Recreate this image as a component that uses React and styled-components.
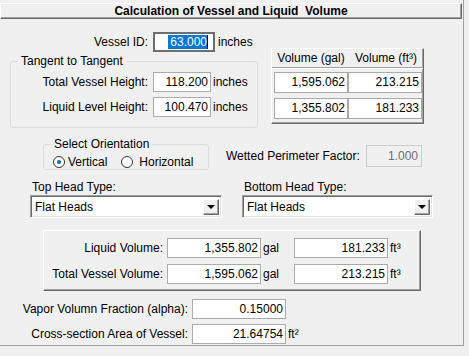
import React from 'react'
import styled, { createGlobalStyle } from 'styled-components'

const GlobalStyle = createGlobalStyle`
  html, body { margin: 0; padding: 0; background: #f0f0f0; }
  body {
    font-family: "Liberation Sans", Arial, sans-serif;
    font-size: 12px;
    color: #000;
  }
  * { box-sizing: border-box; }
`

const Panel = styled.div`
  width: 464px;
  height: 346px;
  padding-top: 3px;
  border-right: 1px solid #a0a0a0;
  border-bottom: 1px solid #a0a0a0;
`

const TitleBar = styled.div`
  width: 462px;
  height: 16px;
  border-top: 1px solid #fff;
  border-left: 1px solid #fff;
  border-right: 1px solid #696969;
  border-bottom: 1px solid #696969;
  box-shadow: inset -1px -1px 0 #a0a0a0;
  font-weight: bold;
  text-align: center;
  line-height: 14px;
  white-space: pre;
`

const TopSection = styled.div`
  display: flex;
  align-items: flex-start;
`

const LeftCol = styled.div`
  width: 258px;
  padding-top: 13px;
`

const Row = styled.div`
  display: flex;
  align-items: center;
  height: ${(p) => p.$h || 20}px;
  margin-top: ${(p) => p.$mt || 0}px;
  margin-left: ${(p) => p.$ml || 0}px;
`

const Label = styled.span`
  flex: none;
  width: ${(p) => p.$w}px;
  margin-right: ${(p) => p.$gap ?? 4}px;
  text-align: ${(p) => p.$align || 'right'};
  white-space: nowrap;
`

const Field = styled.div`
  flex: none;
  width: ${(p) => p.$w}px;
  height: ${(p) => p.$h || 20}px;
  display: flex;
  align-items: center;
  justify-content: flex-end;
  padding: 0 ${(p) => p.$pr ?? 2}px 0 2px;
  background: ${(p) => (p.$disabled ? '#f0f0f0' : '#fff')};
  color: ${(p) => (p.$disabled ? '#6d6d6d' : '#000')};
  border: ${(p) => (p.$focused ? '2px solid #6e6e6e' : p.$disabled ? '1px solid #cccccc' : '1px solid #ababab')};
  white-space: nowrap;
`

const Selected = styled.span`
  background: #0078d7;
  color: #fff;
  line-height: 14px;
  padding-left: 2px;
`

const Caret = styled.span`
  width: 1px;
  height: 14px;
  background: #000;
`

const Unit = styled.span`
  flex: none;
  width: ${(p) => (p.$w ? `${p.$w}px` : 'auto')};
  margin-left: ${(p) => p.$ml ?? 2}px;
  white-space: nowrap;
`

const Group = styled.div`
  margin: ${(p) => p.$mt || 0}px 0 0 ${(p) => p.$ml || 0}px;
  width: ${(p) => p.$w}px;
  padding-bottom: ${(p) => p.$pb || 0}px;
  border: 1px solid #dcdcdc;
  border-radius: 3px;
`

const Legend = styled.div`
  display: table;
  margin: -8px 0 0 7px;
  padding: 0 3px;
  line-height: 14px;
  background: #f0f0f0;
`

const VolTable = styled.div`
  margin: 29px 0 0 13px;
  width: 153px;
  height: 76px;
  border-top: 1px solid #fff;
  border-left: 1px solid #fff;
  border-right: 1px solid #696969;
  border-bottom: 1px solid #696969;
  box-shadow: inset -1px -1px 0 #a0a0a0;
`

const TableHead = styled.div`
  display: grid;
  grid-template-columns: 74px 74px;
  column-gap: 1px;
  padding: 0 2px;
  height: 19px;
  line-height: 18px;
  border-bottom: 1px solid #a0a0a0;
  box-shadow: 0 1px 0 #fff;
  text-align: center;
  white-space: nowrap;
`

const TableBody = styled.div`
  display: grid;
  grid-template-columns: 74px 74px;
  grid-auto-rows: 21px;
  gap: 5px 0;
  padding: 4px 2px 0 2px;
`

const Cell = styled.div`
  border: 1px solid #a9a9a9;
  background: #fff;
  text-align: right;
  padding-right: 2px;
  line-height: 19px;
`

const OrientRow = styled.div`
  display: flex;
  align-items: flex-start;
  margin-top: 16px;
`

const RadioRow = styled.div`
  display: flex;
  align-items: center;
  height: 14px;
  margin-top: 4px;
  padding-left: 9px;
`

const RadioItem = styled.label`
  display: flex;
  align-items: center;
  margin-right: ${(p) => p.$mr || 0}px;
`

const Circle = styled.span`
  width: 12px;
  height: 12px;
  border: 1px solid #333;
  border-radius: 50%;
  background: #fff;
  display: flex;
  align-items: center;
  justify-content: center;
  margin-right: ${(p) => p.$gap}px;
  &::after {
    content: '';
    width: 4px;
    height: 4px;
    border-radius: 50%;
    background: ${(p) => (p.$on ? '#1464b4' : 'transparent')};
  }
`

const HeadRow = styled.div`
  display: flex;
  margin-top: 10px;
`

const HeadCol = styled.div`
  width: ${(p) => p.$w}px;
  margin-left: ${(p) => p.$ml}px;
`

const HeadLabel = styled.div`
  line-height: 14px;
  padding-left: 2px;
`

const Select = styled.div`
  margin-top: 1px;
  height: 23px;
  display: flex;
  align-items: center;
  justify-content: space-between;
  background: #fff;
  border-top: 1px solid #a0a0a0;
  border-left: 1px solid #a0a0a0;
  border-right: 1px solid #fff;
  border-bottom: 1px solid #fff;
  box-shadow: inset 1px 1px 0 #696969, inset -1px -1px 0 #e3e3e3;
  padding: 0 2px 0 4px;
`

const DropButton = styled.span`
  width: 16px;
  height: 16px;
  display: flex;
  align-items: center;
  justify-content: center;
  background: #f0f0f0;
  border-top: 1px solid #fff;
  border-left: 1px solid #fff;
  border-right: 1px solid #696969;
  border-bottom: 1px solid #696969;
  box-shadow: inset -1px -1px 0 #a0a0a0;
  &::after {
    content: '';
    border-left: 4px solid transparent;
    border-right: 4px solid transparent;
    border-top: 4px solid #000;
    margin-top: 1px;
  }
`

const VolBox = styled.div`
  margin: 12px 0 0 43px;
  width: 378px;
  height: 61px;
  padding-top: 7px;
  border-top: 1px solid #fff;
  border-left: 1px solid #fff;
  border-right: 1px solid #696969;
  border-bottom: 1px solid #696969;
  box-shadow: inset -1px -1px 0 #a0a0a0;
`

const BottomRows = styled.div`
  margin-top: 8px;
`

export default function App() {
  return (
    <>
      <GlobalStyle />
      <Panel>
        <TitleBar>{'Calculation of Vessel and Liquid  Volume'}</TitleBar>

        <TopSection>
          <LeftCol>
            <Row>
              <Label $w={148} $gap={5}>Vessel ID:</Label>
              <Field $w={62} $focused $pr={5}>
                <Selected>63.000</Selected>
                <Caret />
              </Field>
              <Unit $ml={3}>inches</Unit>
            </Row>

            <Group $mt={9} $ml={10} $w={248} $pb={10}>
              <Legend>Tangent to Tangent</Legend>
              <Row $mt={4}>
                <Label $w={137} $gap={5}>Total Vessel Height:</Label>
                <Field $w={58}>118.200</Field>
                <Unit>inches</Unit>
              </Row>
              <Row $mt={5}>
                <Label $w={137} $gap={5}>Liquid Level Height:</Label>
                <Field $w={58}>100.470</Field>
                <Unit>inches</Unit>
              </Row>
            </Group>
          </LeftCol>

          <VolTable>
            <TableHead>
              <span>Volume (gal)</span>
              <span>Volume (ft³)</span>
            </TableHead>
            <TableBody>
              <Cell>1,595.062</Cell>
              <Cell>213.215</Cell>
              <Cell>1,355.802</Cell>
              <Cell>181.233</Cell>
            </TableBody>
          </VolTable>
        </TopSection>

        <OrientRow>
          <Group $ml={43} $w={166}>
            <Legend>Select Orientation</Legend>
            <RadioRow>
              <RadioItem $mr={14}>
                <Circle $on $gap={3} />
                Vertical
              </RadioItem>
              <RadioItem>
                <Circle $gap={6} />
                Horizontal
              </RadioItem>
            </RadioRow>
          </Group>
          <Row $h={22} $mt={1} $ml={17}>
            <Label $w={140} $gap={0} $align="left">Wetted Perimeter Factor:</Label>
            <Field $w={56} $h={22} $disabled $pr={3}>1.000</Field>
          </Row>
        </OrientRow>

        <HeadRow>
          <HeadCol $w={192} $ml={30}>
            <HeadLabel>Top Head Type:</HeadLabel>
            <Select>
              <span>Flat Heads</span>
              <DropButton />
            </Select>
          </HeadCol>
          <HeadCol $w={191} $ml={20}>
            <HeadLabel>Bottom Head Type:</HeadLabel>
            <Select>
              <span>Flat Heads</span>
              <DropButton />
            </Select>
          </HeadCol>
        </HeadRow>

        <VolBox>
          <Row>
            <Label $w={119}>Liquid Volume:</Label>
            <Field $w={94}>1,355.802</Field>
            <Unit $w={31}>gal</Unit>
            <Field $w={94}>181.233</Field>
            <Unit>ft³</Unit>
          </Row>
          <Row $mt={6}>
            <Label $w={119}>Total Vessel Volume:</Label>
            <Field $w={94}>1,595.062</Field>
            <Unit $w={31}>gal</Unit>
            <Field $w={94}>213.215</Field>
            <Unit>ft³</Unit>
          </Row>
        </VolBox>

        <BottomRows>
          <Row>
            <Label $w={188}>Vapor Volumn Fraction (alpha):</Label>
            <Field $w={94}>0.15000</Field>
          </Row>
          <Row $mt={5}>
            <Label $w={188}>Cross-section Area of Vessel:</Label>
            <Field $w={94}>21.64754</Field>
            <Unit>ft²</Unit>
          </Row>
        </BottomRows>
      </Panel>
    </>
  )
}
